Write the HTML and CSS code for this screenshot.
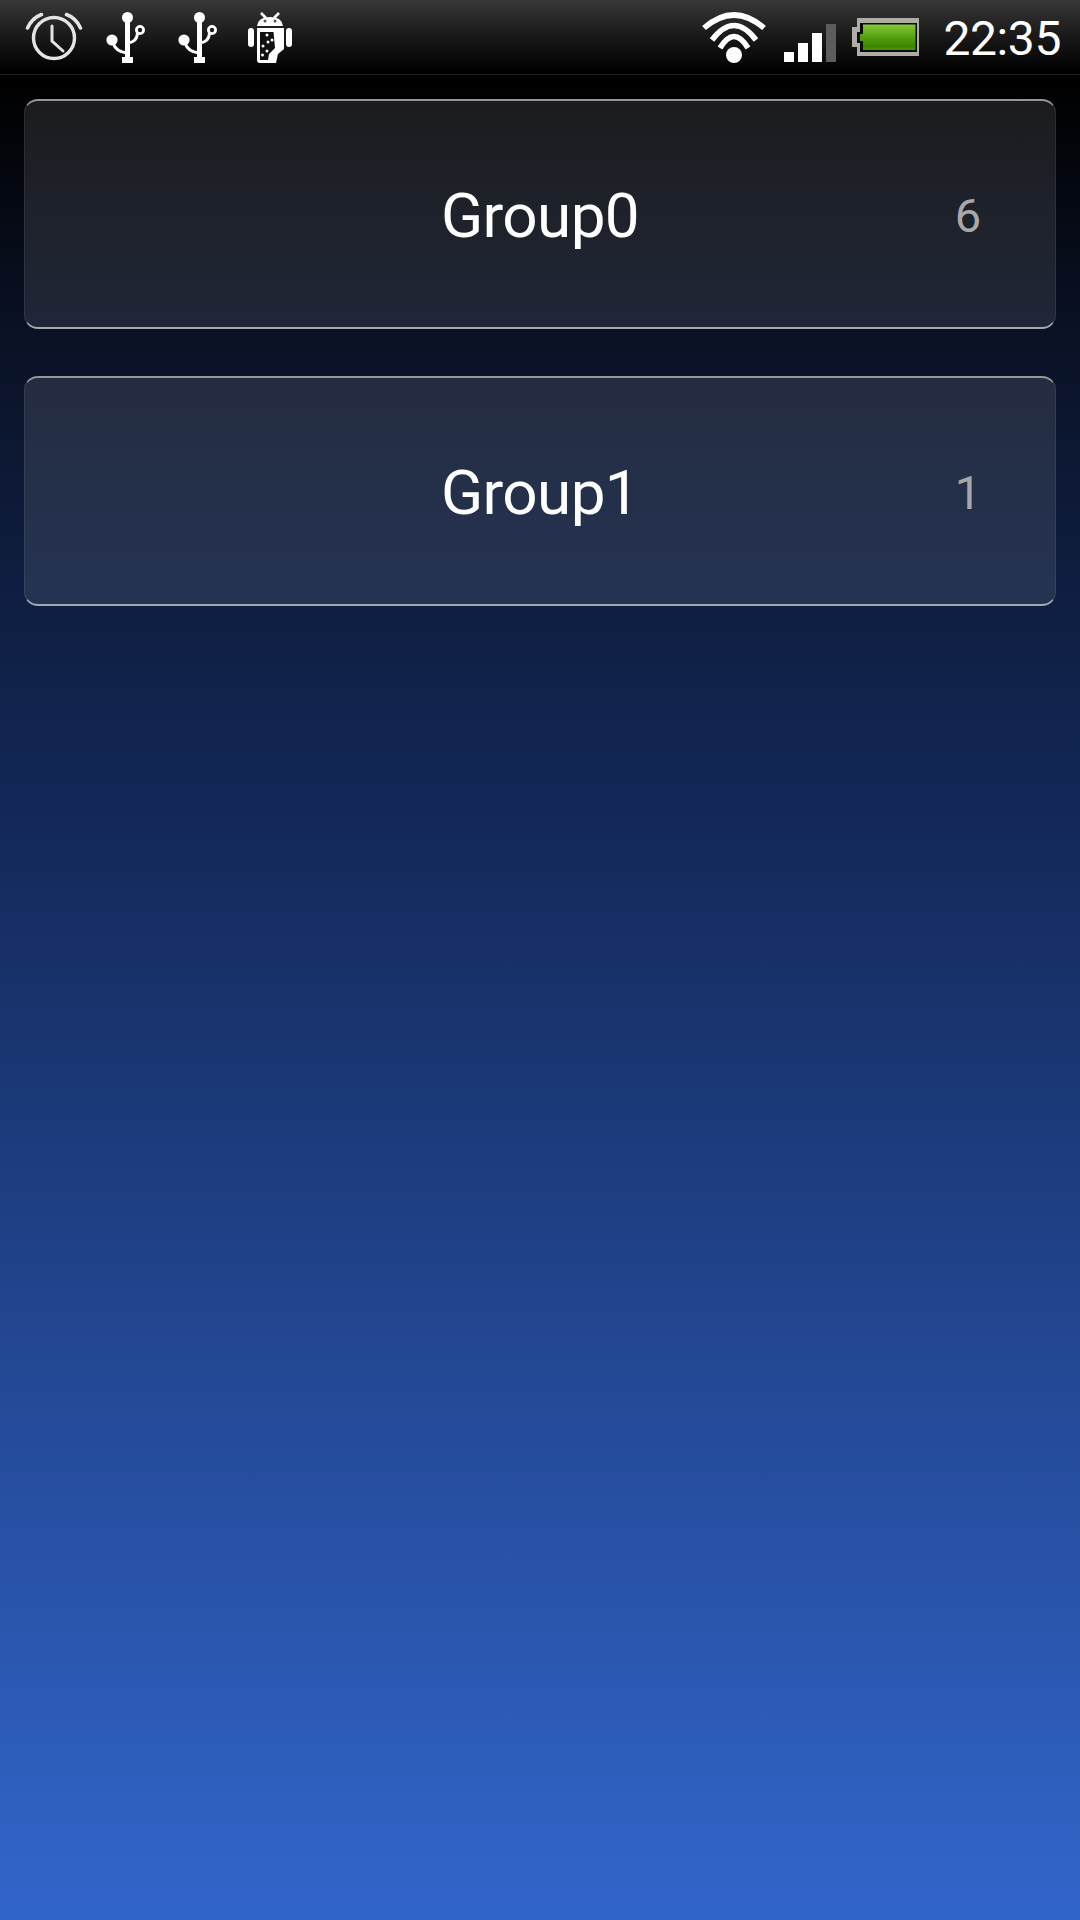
FILE: index.html
```html
<!DOCTYPE html>
<html lang="en">
<head>
    <meta charset="UTF-8">
    <meta name="viewport" content="width=device-width, initial-scale=1.0">
    <title>Groups</title>
    <link rel="stylesheet" href="styles.css">
</head>
<body>

    <!-- Status bar -->
    <div class="status-bar">
        <div class="status-left">
            <svg class="icon-alarm" width="58" height="52" viewBox="0 0 58 52" fill="none" stroke="#e4e4e4" stroke-linecap="round">
                <circle cx="29" cy="26" r="20.5" stroke-width="3.4"/>
                <path d="M27 14 V29 L38 39" stroke-width="3"/>
                <path d="M2.5 16 Q7 6 16.5 2.5 M55.5 16 Q51 6 41.5 2.5" stroke-width="3.6"/>
            </svg>
            <svg class="icon-usb" width="42" height="52" viewBox="0 0 42 52">
                <use href="#usb"/>
            </svg>
            <svg class="icon-usb" width="42" height="52" viewBox="0 0 42 52">
                <g id="usb">
                    <circle cx="21.5" cy="5.5" r="5.5" fill="#fff"/>
                    <rect x="19" y="5" width="5" height="41" fill="#fff"/>
                    <rect x="16" y="45" width="11" height="6" fill="#fff"/>
                    <circle cx="6" cy="28" r="5.6" fill="#fff"/>
                    <path d="M7 31 Q10 40 21 41" fill="none" stroke="#fff" stroke-width="3"/>
                    <circle cx="34" cy="18" r="3.6" fill="none" stroke="#fff" stroke-width="2.8"/>
                    <path d="M31.5 21 Q31 30 22 31" fill="none" stroke="#fff" stroke-width="3"/>
                </g>
            </svg>
            <svg class="icon-debug" width="44" height="52" viewBox="0 0 44 52">
                <path d="M13 1 L18 6 M31 1 L26 6" stroke="#fff" stroke-width="2.6"/>
                <path d="M9 14 Q10 5 22 5 Q34 5 35 14 Z" fill="#fff"/>
                <circle cx="17" cy="9" r="1.5" fill="#555"/>
                <circle cx="27" cy="9" r="1.5" fill="#555"/>
                <rect x="0" y="16" width="6" height="19" rx="3" fill="#fff"/>
                <rect x="38" y="16" width="6" height="19" rx="3" fill="#fff"/>
                <path d="M9 16 H36 V37 L30 42 L28 51 H12 Q9 51 9 48 Z" fill="#fff"/>
                <path d="M12 20 H25.5 L27 36 L21 42 L20 48 H12 Z" fill="#111"/>
                <g fill="#fff">
                    <circle cx="19" cy="23" r="1.5"/><circle cx="24" cy="28" r="1.5"/>
                    <circle cx="20" cy="30" r="1.5"/><circle cx="15" cy="34" r="1.5"/>
                    <circle cx="19" cy="39" r="1.5"/><circle cx="14.5" cy="43" r="1.5"/>
                </g>
            </svg>
        </div>
        <div class="status-right">
            <svg class="icon-wifi" width="64" height="52" viewBox="0 0 64 52" fill="none" stroke="#fff" stroke-width="5.6">
                <path d="M2 16 Q32 -10 62 16"/>
                <path d="M10 28 Q32 -1 54 28"/>
                <path d="M18 36 Q32 13 46 36"/>
                <circle cx="32" cy="43" r="8" fill="#fff" stroke="none"/>
            </svg>
            <div class="signal">
                <span class="bar bar1"></span>
                <span class="bar bar2"></span>
                <span class="bar bar3"></span>
                <span class="bar bar4"></span>
            </div>
            <svg class="battery" width="67" height="38" viewBox="0 0 67 38">
                <defs>
                    <linearGradient id="charge" x1="0" y1="0" x2="0" y2="1">
                        <stop offset="0" stop-color="#86c93a"/>
                        <stop offset="0.5" stop-color="#54a010"/>
                        <stop offset="0.85" stop-color="#3a8500"/>
                        <stop offset="1" stop-color="#479400"/>
                    </linearGradient>
                </defs>
                <path d="M5 0 H67 V38 H5 V29 H0 V9 H5 Z" fill="#aeaea6"/>
                <path d="M8 5 H65 V34 H8 V25 H5 V14 H8 Z" fill="#0c0c0c"/>
                <path d="M11 6.5 H63.5 V32 H11 V23 H8 V16 H11 Z" fill="url(#charge)"/>
            </svg>
            <span class="clock">22:35</span>
        </div>
    </div>

    <!-- Group list -->
    <div class="group-list">
        <div class="group-item">
            <span class="group-name">Group0</span>
            <span class="group-count">6</span>
        </div>
        <div class="group-item">
            <span class="group-name">Group1</span>
            <span class="group-count">1</span>
        </div>
    </div>

</body>
</html>
```

FILE: styles.css
```css
* { margin: 0; padding: 0; box-sizing: border-box; }

body {
    width: 1080px;
    height: 1920px;
    overflow: hidden;
    font-family: Roboto, sans-serif;
    background: linear-gradient(to bottom, #000000 75px, #0a1226 340px, #142a5c 850px, #244a98 1400px, #3265cb 1920px);
}

.status-bar {
    height: 75px;
    display: flex;
    justify-content: space-between;
    align-items: center;
    padding: 2px 19px 0 25px;
    background: linear-gradient(to bottom, #383838 0, #1c1c1c 32px, #000000 72px);
    border-bottom: 1px solid #1e1e1e;
}

.status-left { display: flex; align-items: center; gap: 30px; }
.status-right { display: flex; align-items: center; }

.icon-alarm { margin-right: -7px; }
.icon-debug { margin-left: -2px; }
.icon-wifi { margin-right: 18px; }

.signal {
    display: flex;
    align-items: flex-end;
    gap: 4px;
    height: 38px;
    margin: 10px 16px 0 0;
}

.bar { width: 10px; background: #fff; }
.bar1 { height: 10px; }
.bar2 { height: 19px; }
.bar3 { height: 29px; }
.bar4 { height: 38px; background: #5c5c5c; }

.battery { margin: 0 24px 2px 0; }

.clock {
    font-size: 48px;
    color: #fff;
    letter-spacing: -0.4px;
}

.group-list {
    display: flex;
    flex-direction: column;
    gap: 47px;
    padding: 24px 24px 0;
}

.group-item {
    height: 230px;
    display: grid;
    grid-template-columns: 1fr auto 1fr;
    align-items: center;
    border-radius: 14px;
    border-top: 2px solid #969696;
    border-bottom: 2px solid #a5a8ae;
    border-left: 1px solid rgba(255,255,255,0.08);
    border-right: 1px solid rgba(255,255,255,0.08);
    background: linear-gradient(to bottom, rgba(255,255,255,0.105), rgba(255,255,255,0.095));
}

.group-name {
    grid-column: 2;
    font-size: 62px;
    letter-spacing: -0.6px;
    color: #fff;
    padding-top: 3px;
}

.group-count {
    grid-column: 3;
    justify-self: end;
    width: 60px;
    margin-right: 57px;
    text-align: center;
    font-size: 47px;
    color: #a8a8a8;
    padding-top: 3px;
}
```
